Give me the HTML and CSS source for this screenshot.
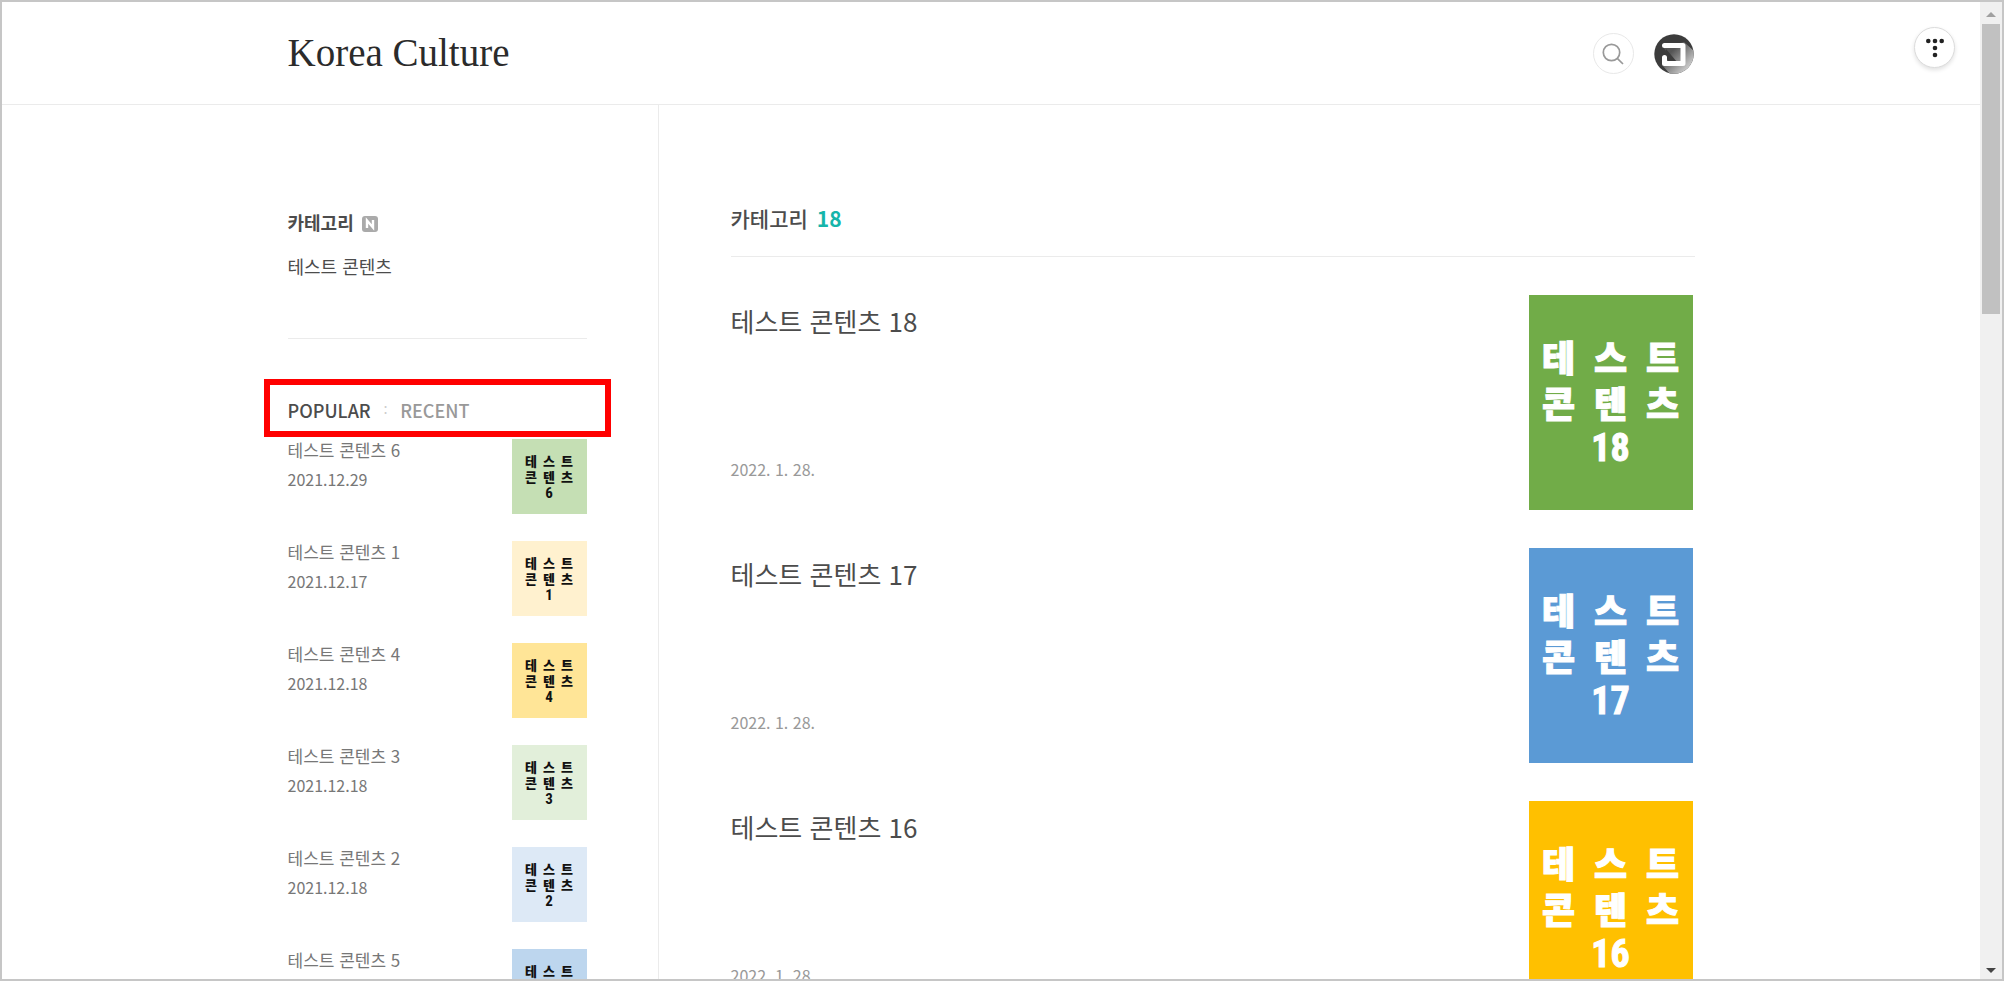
FILE: index.html
```html
<!DOCTYPE html>
<html lang="ko">
<head>
<meta charset="utf-8">
<title>Korea Culture</title>
<link rel="stylesheet" href="styles.css">
</head>
<body>
<div class="page">
  <header class="header">
    <div class="wrap header-row">
      <h1 class="logo"><a href="#">Korea Culture</a></h1>
      <div class="tools">
        <button class="search" type="button" aria-label="검색">
          <svg width="22" height="22" viewBox="0 0 22 22" fill="none" stroke="#999" stroke-width="1.7"><circle cx="9.5" cy="9.5" r="8.2"/><path d="M15.3 15.3L21 21"/></svg>
        </button>
        <button class="avatar" type="button" aria-label="프로필">
          <svg width="40" height="40" viewBox="0 0 40 40">
            <defs>
              <clipPath id="disc"><circle cx="20" cy="20" r="19.7"/></clipPath>
              <linearGradient id="shade" x1="0" y1="0" x2="1" y2="1"><stop offset=".3" stop-color="#555"/><stop offset=".85" stop-color="#d4d4d4"/></linearGradient>
            </defs>
            <g clip-path="url(#disc)">
              <path fill="#3c3c3c" d="M0 0h40v40H0z"/>
              <path fill="url(#shade)" d="M9 13L30 8l10 9v23H16L8 31l1-9 11 5z"/>
              <path fill="#3c3c3c" d="M12 15l11 13h-8l-3-4z"/>
              <path fill="none" stroke="#fff" stroke-width="5" stroke-linejoin="round" stroke-linecap="round" d="M10.5 11.500H29V29.500H10.500V23.500"/>
            </g>
          </svg>
        </button>
      </div>
    </div>
    <button class="tistory" type="button" aria-label="티스토리">
      <svg width="20" height="20" viewBox="0 0 20 20" fill="#222"><circle cx="3.300" cy="3" r="2.300"/><circle cx="10" cy="3" r="2.300"/><circle cx="16.700" cy="3" r="2.300"/><circle cx="10" cy="10" r="2.300"/><circle cx="10" cy="17" r="2.300"/></svg>
    </button>
  </header>
  <div class="wrap columns">
    <aside class="sidebar">
      <nav class="categories">
        <a class="cat-all" href="#">카테고리
          <svg width="16" height="16" viewBox="0 0 16 16"><rect width="16" height="16" rx="3" fill="#aaa"/><path d="M5 12V4.500l6 7V4" fill="none" stroke="#fff" stroke-width="2.400"/></svg>
        </a>
        <a class="cat" href="#">테스트 콘텐츠</a>
      </nav>
      <div class="tabs">
        <button class="tab active" type="button">POPULAR</button>
        <span class="colon">:</span>
        <button class="tab" type="button">RECENT</button>
      </div>
      <ul class="posts">
        <li><a href="#"><span class="info"><span class="name">테스트 콘텐츠 6</span><time>2021.12.29</time></span><span class="thumb small green"><span>테</span><span>스</span><span>트</span><span>콘</span><span>텐</span><span>츠</span><b>6</b></span></a></li>
        <li><a href="#"><span class="info"><span class="name">테스트 콘텐츠 1</span><time>2021.12.17</time></span><span class="thumb small cream"><span>테</span><span>스</span><span>트</span><span>콘</span><span>텐</span><span>츠</span><b>1</b></span></a></li>
        <li><a href="#"><span class="info"><span class="name">테스트 콘텐츠 4</span><time>2021.12.18</time></span><span class="thumb small yellow"><span>테</span><span>스</span><span>트</span><span>콘</span><span>텐</span><span>츠</span><b>4</b></span></a></li>
        <li><a href="#"><span class="info"><span class="name">테스트 콘텐츠 3</span><time>2021.12.18</time></span><span class="thumb small mint"><span>테</span><span>스</span><span>트</span><span>콘</span><span>텐</span><span>츠</span><b>3</b></span></a></li>
        <li><a href="#"><span class="info"><span class="name">테스트 콘텐츠 2</span><time>2021.12.18</time></span><span class="thumb small ice"><span>테</span><span>스</span><span>트</span><span>콘</span><span>텐</span><span>츠</span><b>2</b></span></a></li>
        <li><a href="#"><span class="info"><span class="name">테스트 콘텐츠 5</span><time>2021.12.18</time></span><span class="thumb small sky"><span>테</span><span>스</span><span>트</span><span>콘</span><span>텐</span><span>츠</span><b>5</b></span></a></li>
      </ul>
    </aside>
    <main class="main">
      <h2 class="list-title">카테고리 <span class="count">18</span></h2>
      <a class="entry" href="#"><span class="entry-text"><span class="entry-name">테스트 콘텐츠 18</span><time>2022. 1. 28.</time></span><span class="thumb large leaf"><span>테</span><span>스</span><span>트</span><span>콘</span><span>텐</span><span>츠</span><b>18</b></span></a>
      <a class="entry" href="#"><span class="entry-text"><span class="entry-name">테스트 콘텐츠 17</span><time>2022. 1. 28.</time></span><span class="thumb large blue"><span>테</span><span>스</span><span>트</span><span>콘</span><span>텐</span><span>츠</span><b>17</b></span></a>
      <a class="entry" href="#"><span class="entry-text"><span class="entry-name">테스트 콘텐츠 16</span><time>2022. 1. 28.</time></span><span class="thumb large amber"><span>테</span><span>스</span><span>트</span><span>콘</span><span>텐</span><span>츠</span><b>16</b></span></a>
    </main>
  </div>
</div>
<div class="scrollbar" aria-hidden="true">
  <svg class="up" width="10" height="5" viewBox="0 0 10 5"><path fill="#a0a0a0" d="M5 0l5 5H0z"/></svg>
  <div class="track"><div class="thumb-bar"></div></div>
  <svg class="down" width="10" height="5" viewBox="0 0 10 5"><path fill="#444" d="M0 0h10L5 5z"/></svg>
</div>
</body>
</html>
```

FILE: styles.css
```css
* { box-sizing: border-box; }
body {
  margin: 0;
  height: 100vh;
  display: flex;
  overflow: hidden;
  border: 2px solid #c6c6c6;
  background: #fff;
  color: #4c4c4c;
  font-family: "Noto Sans CJK KR", sans-serif;
}
a { color: inherit; text-decoration: none; }
button { padding: 0; border: 0; background: none; font: inherit; color: inherit; cursor: pointer; }
h1, h2, ul { margin: 0; padding: 0; list-style: none; }

.page { flex: 1; min-width: 0; overflow: hidden; display: flex; flex-direction: column; }
.wrap { width: 100%; max-width: 1407px; margin: 0 auto; }

.header { position: relative; flex: none; border-bottom: 1px solid #ebebeb; }
.header-row { display: flex; align-items: center; justify-content: space-between; height: 102px; }
.logo { font: 400 39px/48px "Liberation Serif", serif; color: #2b2b2b; }
.tools { display: flex; align-items: center; gap: 20px; padding: 1px 1px 0 0; }
.search {
  display: flex; align-items: center; justify-content: center;
  width: 41px; height: 41px;
  border: 1px solid #e8e8e8; border-radius: 50%;
}
.avatar { display: flex; }
.tistory {
  position: absolute; top: 25px; right: 25px;
  display: flex; align-items: center; justify-content: center;
  width: 41px; height: 41px;
  border: 1px solid #dcdcdc; border-radius: 50%;
  background: #fff;
  box-shadow: 0 2px 4px rgba(0, 0, 0, .12);
}

.columns { flex: 1 0 auto; display: flex; }
.sidebar { flex: none; width: 371px; padding: 103px 71px 0 0; border-right: 1px solid #ebebeb; }
.categories {
  display: flex; flex-direction: column; gap: 16px;
  padding-bottom: 58px; border-bottom: 1px solid #ebebeb;
  font-size: 18px; line-height: 28px;
}
.cat-all { display: flex; align-items: center; gap: 8px; font-weight: 700; }
.cat-all svg { margin-top: 4px; }
.tabs {
  position: relative;
  display: flex; gap: 13px; align-items: center;
  margin: 57px 0 15px;
  font-size: 18px; line-height: 28px; font-weight: 500;
}
.tabs::after { content: ""; position: absolute; inset: -17px -24px -13px; border: 6px solid #f00; pointer-events: none; }
.tab { color: #999; }
.active { color: #4c4c4c; }
.colon { font-size: 12px; color: #ccc; }
.posts { display: flex; flex-direction: column; gap: 27px; color: #777; }
.posts a { display: flex; justify-content: space-between; }
.info { display: flex; flex-direction: column; gap: 7px; font-size: 16px; line-height: 22px; }
.name { font-size: 17px; }

.main { flex: 1; min-width: 0; padding: 97px 0 0 72px; }
.list-title {
  display: flex; gap: 9px;
  margin-bottom: 38px; padding-bottom: 22px;
  border-bottom: 1px solid #ebebeb;
  font-size: 21px; line-height: 32px; font-weight: 500;
}
.count { color: #16b5aa; font-weight: 700; }
.entry { display: flex; justify-content: space-between; margin: 0 2px 38px 0; }
.entry-text { display: flex; flex-direction: column; justify-content: space-between; padding: 7px 0 29px; }
.entry-name { font-size: 26px; line-height: 38px; }
.entry time { font-size: 16px; line-height: 24px; color: #999; }

.thumb { flex: none; display: grid; align-content: center; justify-content: center; text-align: center; font-weight: 900; }
.thumb b { grid-column: 1 / -1; font-family: "Roboto Condensed", Roboto, sans-serif; font-weight: 700; }
.small { width: 75px; height: 75px; grid-template-columns: repeat(3, 18px); font-size: 13px; line-height: 16px; color: #111; }
.small b { font-size: 15px; }
.large { width: 164px; height: 215px; padding-bottom: 2px; grid-template-columns: repeat(3, 52px); font-size: 36px; line-height: 46px; color: #fff; -webkit-text-stroke: 1px #fff; }
.large b { font-size: 38px; }
.green { background: #c5dfb4; }
.cream { background: #fff1cf; }
.yellow { background: #ffe597; }
.mint { background: #e2efda; }
.ice { background: #dde9f6; }
.sky { background: #bdd6ee; }
.leaf { background: #71ac48; }
.blue { background: #5b9ad5; }
.amber { background: #ffc000; }

.scrollbar { flex: none; width: 22px; display: flex; flex-direction: column; align-items: center; padding: 10px 0 6px; background: #f0f0f0; }
.track { flex: 1; width: 18px; padding: 7px 0; }
.thumb-bar { height: 31%; background: #c1c1c1; }
```
